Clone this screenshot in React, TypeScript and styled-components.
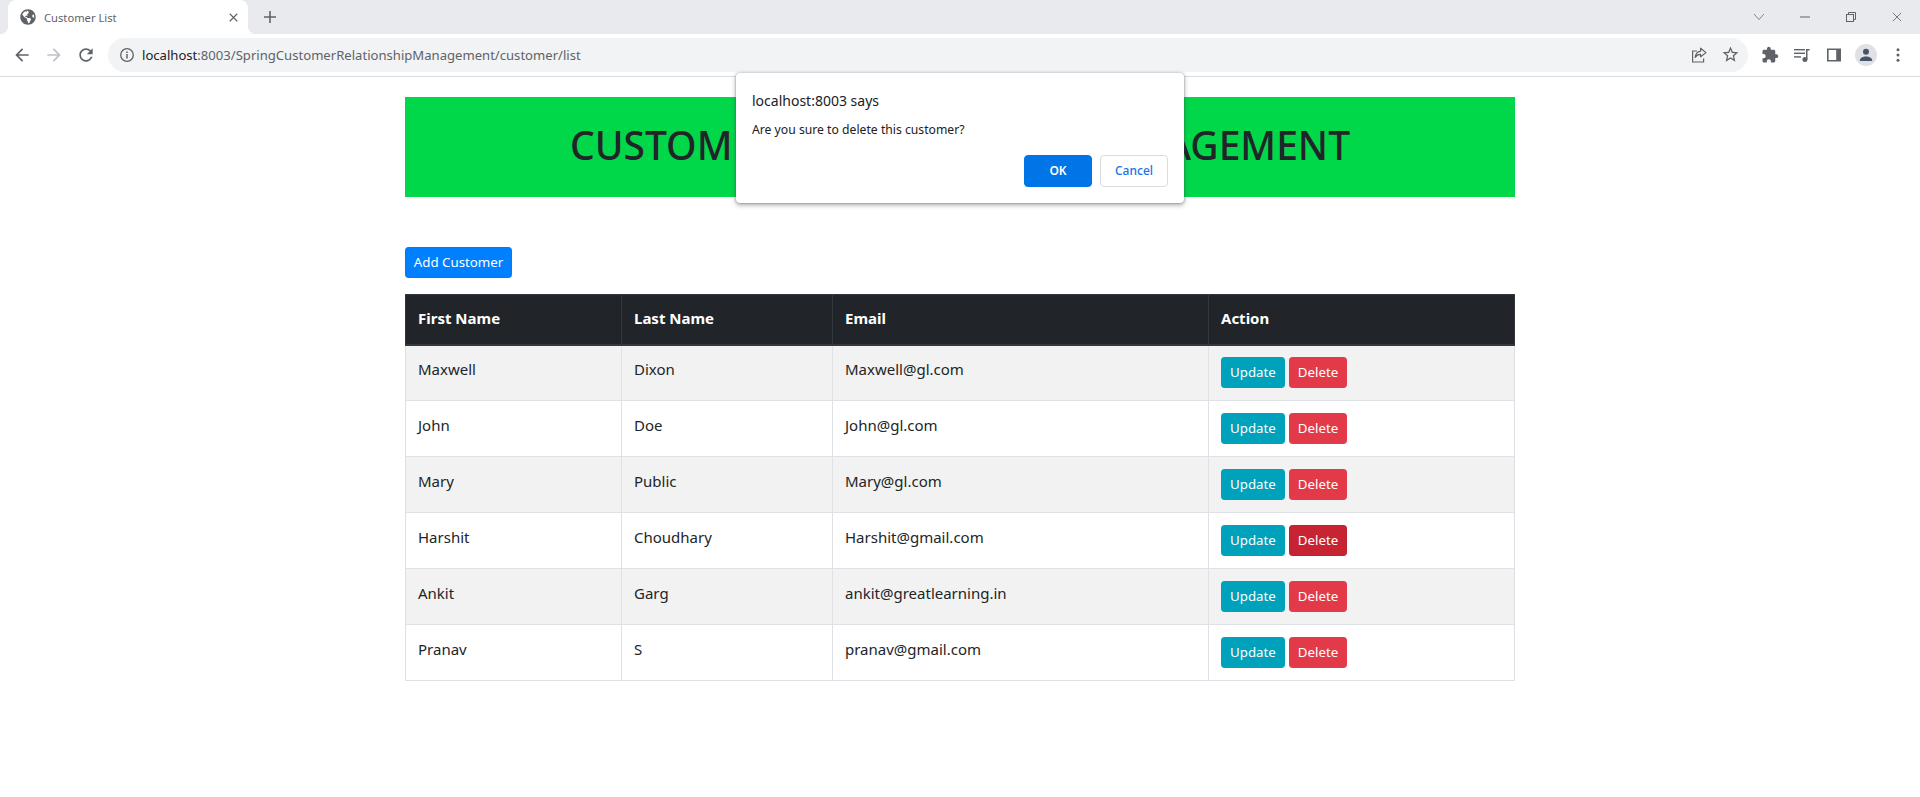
import React from 'react';
import styled, { createGlobalStyle } from 'styled-components';
import { FaGlobeAmericas } from 'react-icons/fa';

const FONT = `"Noto Sans", "Open Sans", Arial, sans-serif`;

const customers = [
  { first: 'Maxwell', last: 'Dixon', email: 'Maxwell@gl.com' },
  { first: 'John', last: 'Doe', email: 'John@gl.com' },
  { first: 'Mary', last: 'Public', email: 'Mary@gl.com' },
  { first: 'Harshit', last: 'Choudhary', email: 'Harshit@gmail.com', hovered: true },
  { first: 'Ankit', last: 'Garg', email: 'ankit@greatlearning.in' },
  { first: 'Pranav', last: 'S', email: 'pranav@gmail.com' },
];

const GlobalStyle = createGlobalStyle`
  html, body {
    margin: 0;
    height: 100%;
    background: #fff;
    overflow: hidden;
  }
  body {
    font-family: ${FONT};
    font-size: 16px;
    color: #212529;
  }
  * { box-sizing: border-box; }
`;

const Shell = styled.div`
  position: relative;
  width: 1920px;
  height: 797px;
`;

const TabStrip = styled.div`
  display: flex;
  align-items: stretch;
  height: 34px;
  padding-left: 8px;
  background: #e8eaed;
`;

const Tab = styled.div`
  position: relative;
  display: flex;
  align-items: center;
  width: 240px;
  padding: 0 10px 0 12px;
  background: #fff;
  border-radius: 8px 8px 0 0;
  font-size: 11.2px;
  color: #5f6368;

  &::before,
  &::after {
    content: '';
    position: absolute;
    bottom: 0;
    width: 8px;
    height: 8px;
  }
  &::before {
    left: -8px;
    background: radial-gradient(circle at 0 0, #e8eaed 8px, #fff 8.5px);
  }
  &::after {
    right: -8px;
    background: radial-gradient(circle at 100% 0, #e8eaed 8px, #fff 8.5px);
  }
`;

const TabTitle = styled.span`
  flex: 1;
  margin-left: 8px;
`;

const NewTab = styled.div`
  display: flex;
  align-items: center;
  justify-content: center;
  width: 28px;
  margin-left: 8px;
`;

const WindowControls = styled.div`
  display: flex;
  margin-left: auto;
`;

const WindowButton = styled.div`
  display: flex;
  align-items: center;
  justify-content: center;
  width: 46px;
`;

const Toolbar = styled.div`
  display: flex;
  align-items: center;
  height: 43px;
  padding: 0 6px 1px;
  background: #fff;
  border-bottom: 1px solid #dadce0;
`;

const ToolButton = styled.div`
  display: flex;
  align-items: center;
  justify-content: center;
  width: 32px;
  height: 32px;
`;

const Omnibox = styled.div`
  display: flex;
  align-items: center;
  flex: 1;
  height: 34px;
  margin: 0 6px;
  padding: 0 6px 0 11px;
  background: #f1f3f4;
  border-radius: 17px;
  font-size: 13.1px;
  color: #5f6368;
`;

const Url = styled.span`
  flex: 1;
  margin-left: 7px;

  b {
    font-weight: 400;
    color: #202124;
  }
`;

const OmniAction = styled.div`
  display: flex;
  align-items: center;
  justify-content: center;
  width: 24px;
  height: 24px;
  margin-left: 7px;
`;

const Avatar = styled.div`
  display: flex;
  align-items: center;
  justify-content: center;
  width: 22px;
  height: 22px;
  border-radius: 50%;
  background: #dfe1e5;
`;

const Container = styled.main`
  width: 1110px;
  margin: 0 auto;
  padding-top: 20px;
`;

const Banner = styled.header`
  display: flex;
  align-items: center;
  justify-content: center;
  height: 100px;
  margin-bottom: 50px;
  padding-bottom: 4px;
  background: #00d84a;
`;

const Heading = styled.h1`
  margin: 0;
  font-size: 39px;
  font-weight: 500;
  line-height: 1.2;
  color: #212529;
`;

const Button = styled.button<{ $variant: 'primary' | 'info' | 'danger' | 'dangerHover' }>`
  display: inline-block;
  height: 31px;
  padding: 0 8px;
  border: 1px solid
    ${p =>
      ({ primary: '#007bff', info: '#00a2bb', danger: '#e23a49', dangerHover: '#bd2130' }[p.$variant])};
  border-radius: 3.2px;
  background: ${p =>
    ({ primary: '#007fff', info: '#00a2bb', danger: '#e23a49', dangerHover: '#c82333' }[p.$variant])};
  color: #fff;
  font-family: ${FONT};
  font-size: 13.3px;
  line-height: 29px;
  vertical-align: top;
`;

const AddButton = styled(Button)`
  display: block;
  width: 107px;
  padding: 0;
  margin-bottom: 16px;
`;

const CustomerTable = styled.table`
  width: 1109px;
  table-layout: fixed;
  border-collapse: collapse;
`;

const HeadCell = styled.th`
  height: 50px;
  padding: 0 12px 2px;
  background: #212529;
  border: 1px solid #32383e;
  border-bottom-width: 2px;
  color: #fff;
  font-size: 15px;
  font-weight: 700;
  text-align: left;
`;

const Row = styled.tr`
  &:nth-child(odd) {
    background: #f2f2f2;
  }
`;

const Cell = styled.td`
  height: 56px;
  padding: 11.5px 12px;
  border: 1px solid #dee2e6;
  font-size: 15px;
  line-height: 24px;
  vertical-align: top;
  color: #212529;
`;

const ActionGap = styled.span`
  display: inline-block;
  width: 4px;
`;

const Dialog = styled.div`
  position: absolute;
  top: 73px;
  left: 736px;
  width: 448px;
  height: 130px;
  padding: 19px 16px 0;
  background: #fff;
  border-radius: 4px;
  box-shadow: 0 0 2px rgba(60, 64, 67, 0.5), 0 2px 5px rgba(60, 64, 67, 0.45);
  color: #202124;
`;

const DialogTitle = styled.div`
  font-size: 14px;
  line-height: 18px;
`;

const DialogMessage = styled.div`
  margin-top: 11px;
  font-size: 12.2px;
  line-height: 18px;
`;

const DialogActions = styled.div`
  display: flex;
  justify-content: flex-end;
  gap: 8px;
  margin-top: 16px;
`;

const DialogButton = styled.button<{ $primary?: boolean }>`
  width: 68px;
  height: 32px;
  padding: 0 0 2px;
  border: 1px solid ${p => (p.$primary ? '#0075e8' : '#dadce0')};
  border-radius: 4px;
  background: ${p => (p.$primary ? '#0075e8' : '#fff')};
  color: ${p => (p.$primary ? '#fff' : '#1a73e8')};
  font-family: ${FONT};
  font-size: 12px;
  font-weight: ${p => (p.$primary ? 600 : 500)};
`;

const GREY = '#5f6368';

const Icon: React.FC<{ size?: number; fill?: string; d: string }> = ({ size = 20, fill = GREY, d }) => (
  <svg width={size} height={size} viewBox="0 0 24 24" fill={fill}>
    <path d={d} />
  </svg>
);

const ARROW_LEFT = 'M20 11H7.83l5.59-5.59L12 4l-8 8 8 8 1.41-1.41L7.83 13H20v-2z';
const ARROW_RIGHT = 'M4 11h12.17l-5.59-5.59L12 4l8 8-8 8-1.41-1.41L16.17 13H4v-2z';
const RELOAD =
  'M17.65 6.35C16.2 4.9 14.21 4 12 4c-4.42 0-7.99 3.58-7.99 8s3.57 8 7.99 8c3.73 0 6.84-2.55 7.73-6h-2.08c-.82 2.33-3.04 4-5.65 4-3.31 0-6-2.69-6-6s2.69-6 6-6c1.66 0 3.14.69 4.22 1.78L13 11h7V4l-2.35 2.35z';
const STAR =
  'M22 9.24l-7.19-.62L12 2 9.19 8.63 2 9.24l5.46 4.73L5.82 21 12 17.27 18.18 21l-1.63-7.03L22 9.24zM12 15.4l-3.76 2.27 1-4.28-3.32-2.88 4.38-.38L12 6.1l1.71 4.04 4.38.38-3.32 2.88 1 4.28L12 15.4z';
const PUZZLE =
  'M20.5 11H19V7c0-1.1-.9-2-2-2h-4V3.5C13 2.12 11.88 1 10.5 1S8 2.12 8 3.5V5H4c-1.1 0-1.99.9-1.99 2v3.8H3.5c1.49 0 2.7 1.21 2.7 2.7s-1.21 2.7-2.7 2.7H2V20c0 1.1.9 2 2 2h3.8v-1.5c0-1.49 1.21-2.7 2.7-2.7 1.49 0 2.7 1.21 2.7 2.7V22H17c1.1 0 2-.9 2-2v-4h1.5c1.38 0 2.5-1.12 2.5-2.5S21.88 11 20.5 11z';

const InfoIcon = () => (
  <svg width="16" height="16" viewBox="0 0 16 16" fill="none" stroke={GREY}>
    <circle cx="8" cy="8" r="6.3" strokeWidth="1.3" />
    <path d="M8 7v4.6" strokeWidth="1.5" />
    <path d="M8 4.4v1.5" strokeWidth="1.5" />
  </svg>
);

const ShareIcon = () => (
  <svg width="18" height="18" viewBox="0 0 18 18" fill="none" stroke={GREY} strokeWidth="1.2">
    <path d="M7 5H2.6v11h11v-3.5" />
    <path d="M10.6 2.2 16 6.6l-5.4 4.2V8.4c-2.6 0-4.3.9-5.4 3 .3-3.4 2.2-5.6 5.4-6.2z" strokeLinejoin="round" />
  </svg>
);

const MediaIcon = () => (
  <svg width="18" height="18" viewBox="0 0 18 18" fill={GREY}>
    <rect x="1" y="3" width="11" height="1.4" />
    <rect x="1" y="6.6" width="11" height="1.4" />
    <rect x="1" y="10.2" width="7" height="1.4" />
    <rect x="13" y="3" width="1.5" height="10.5" />
    <rect x="13" y="3" width="3.6" height="1.5" />
    <circle cx="11.9" cy="13.4" r="2.5" />
  </svg>
);

const SidePanelIcon = () => (
  <svg width="16" height="16" viewBox="0 0 16 16">
    <rect x="1" y="1.5" width="14" height="13" fill={GREY} />
    <rect x="2.6" y="3" width="7.6" height="10" fill="#fff" />
  </svg>
);

const PersonIcon = () => (
  <svg width="16" height="16" viewBox="0 0 16 16" fill="#44546a">
    <circle cx="8" cy="4.8" r="3" />
    <path d="M1.8 14c0-3.2 3.6-4.4 6.2-4.4s6.2 1.2 6.2 4.4z" />
  </svg>
);

const DotsIcon = () => (
  <svg width="16" height="16" viewBox="0 0 16 16" fill={GREY}>
    <circle cx="8" cy="2.8" r="1.5" />
    <circle cx="8" cy="8" r="1.5" />
    <circle cx="8" cy="13.2" r="1.5" />
  </svg>
);

const CloseIcon: React.FC<{ size: number; color: string; width?: number }> = ({ size, color, width = 1.2 }) => (
  <svg width={size} height={size} viewBox="0 0 12 12" stroke={color} strokeWidth={width} fill="none">
    <path d="M1 1l10 10M11 1L1 11" />
  </svg>
);

const PlusIcon = () => (
  <svg width="12" height="12" viewBox="0 0 12 12" stroke={GREY} strokeWidth="1.6" fill="none">
    <path d="M6 0v12M0 6h12" />
  </svg>
);

const ChevronIcon = () => (
  <svg width="12" height="8" viewBox="0 0 12 8" stroke="#80868b" strokeWidth="1" fill="none">
    <path d="M1 1l5 5.5L11 1" />
  </svg>
);

const MinimizeIcon = () => (
  <svg width="10" height="2" viewBox="0 0 10 2" stroke="#5f6368" strokeWidth="1" fill="none">
    <path d="M0 1h10" />
  </svg>
);

const RestoreIcon = () => (
  <svg width="10" height="10" viewBox="0 0 10 10" stroke="#5f6368" strokeWidth="1" fill="none">
    <rect x="0.5" y="2.5" width="7" height="7" />
    <path d="M2.5 2.5v-2h7v7h-2" />
  </svg>
);

const App: React.FC = () => (
  <Shell>
    <GlobalStyle />
    <TabStrip>
      <Tab>
        <FaGlobeAmericas size={16} color={GREY} />
        <TabTitle>Customer List</TabTitle>
        <CloseIcon size={9} color={GREY} width={1.5} />
      </Tab>
      <NewTab>
        <PlusIcon />
      </NewTab>
      <WindowControls>
        <WindowButton>
          <ChevronIcon />
        </WindowButton>
        <WindowButton>
          <MinimizeIcon />
        </WindowButton>
        <WindowButton>
          <RestoreIcon />
        </WindowButton>
        <WindowButton>
          <CloseIcon size={10} color="#5f6368" width={1} />
        </WindowButton>
      </WindowControls>
    </TabStrip>
    <Toolbar>
      <ToolButton>
        <Icon d={ARROW_LEFT} size={20} />
      </ToolButton>
      <ToolButton>
        <Icon d={ARROW_RIGHT} size={20} fill="#bdc1c6" />
      </ToolButton>
      <ToolButton>
        <Icon d={RELOAD} size={20} />
      </ToolButton>
      <Omnibox>
        <InfoIcon />
        <Url>
          <b>localhost</b>:8003/SpringCustomerRelationshipManagement/customer/list
        </Url>
        <OmniAction>
          <ShareIcon />
        </OmniAction>
        <OmniAction>
          <Icon d={STAR} size={19} />
        </OmniAction>
      </Omnibox>
      <ToolButton>
        <Icon d={PUZZLE} size={18} />
      </ToolButton>
      <ToolButton>
        <MediaIcon />
      </ToolButton>
      <ToolButton>
        <SidePanelIcon />
      </ToolButton>
      <ToolButton>
        <Avatar>
          <PersonIcon />
        </Avatar>
      </ToolButton>
      <ToolButton>
        <DotsIcon />
      </ToolButton>
    </Toolbar>

    <Container>
      <Banner>
        <Heading>CUSTOMER RELATIONSHIP MANAGEMENT</Heading>
      </Banner>
      <AddButton $variant="primary">Add Customer</AddButton>
      <CustomerTable>
        <colgroup>
          <col style={{ width: 216 }} />
          <col style={{ width: 211 }} />
          <col style={{ width: 376 }} />
          <col style={{ width: 306 }} />
        </colgroup>
        <thead>
          <tr>
            <HeadCell>First Name</HeadCell>
            <HeadCell>Last Name</HeadCell>
            <HeadCell>Email</HeadCell>
            <HeadCell>Action</HeadCell>
          </tr>
        </thead>
        <tbody>
          {customers.map(c => (
            <Row key={c.email}>
              <Cell>{c.first}</Cell>
              <Cell>{c.last}</Cell>
              <Cell>{c.email}</Cell>
              <Cell>
                <Button $variant="info">Update</Button>
                <ActionGap />
                <Button $variant={c.hovered ? 'dangerHover' : 'danger'}>Delete</Button>
              </Cell>
            </Row>
          ))}
        </tbody>
      </CustomerTable>
    </Container>

    <Dialog>
      <DialogTitle>localhost:8003 says</DialogTitle>
      <DialogMessage>Are you sure to delete this customer?</DialogMessage>
      <DialogActions>
        <DialogButton $primary>OK</DialogButton>
        <DialogButton>Cancel</DialogButton>
      </DialogActions>
    </Dialog>
  </Shell>
);

export default App;
